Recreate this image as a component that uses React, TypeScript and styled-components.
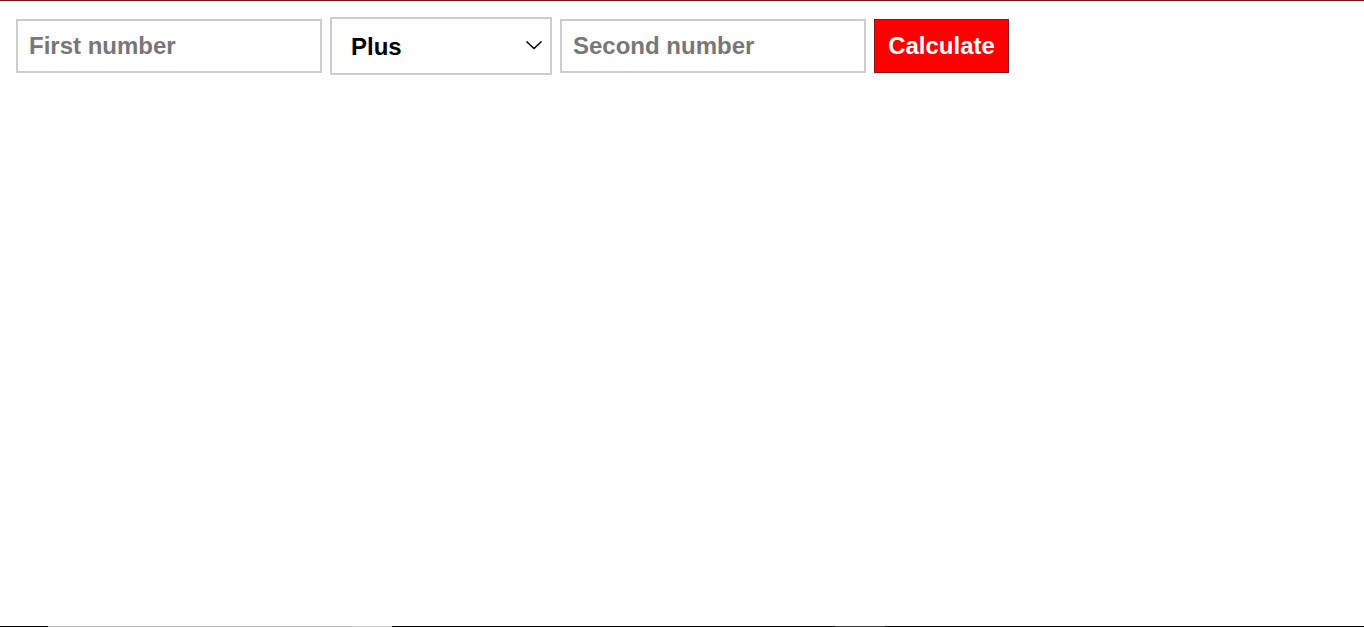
import React from "react";
import styled, { createGlobalStyle } from "styled-components";

const Global = createGlobalStyle`
  html, body { margin: 0; padding: 0; background: #fff; }
  body {
    border-top: 1px solid #7a1212;
    font-family: "Liberation Sans", Arial, sans-serif;
    min-height: 626px;
    box-sizing: border-box;
  }
`;

const Form = styled.form`
  display: flex;
  align-items: center;
  gap: 8px;
  padding: 16px;
`;

const NumberInput = styled.input`
  box-sizing: border-box;
  width: 306px;
  height: 54px;
  border: 2px solid #cccccc;
  padding: 0 11px;
  font-family: "Liberation Sans", Arial, sans-serif;
  font-weight: 700;
  font-size: 24px;
  color: #000;
  outline: none;
  &::placeholder { color: #777777; opacity: 1; }
`;

const SelectWrap = styled.div`
  position: relative;
  width: 222px;
  height: 58px;
`;

const Select = styled.select`
  box-sizing: border-box;
  width: 100%;
  height: 100%;
  appearance: none;
  border: 2px solid #cccccc;
  background: #fff;
  padding: 0 0 0 19px;
  font-family: "Liberation Sans", Arial, sans-serif;
  font-weight: 700;
  font-size: 24px;
  color: #000;
  outline: none;
`;

const Chevron = styled.svg`
  position: absolute;
  right: 9px;
  top: 22px;
  pointer-events: none;
`;

const Button = styled.button`
  box-sizing: border-box;
  width: 135px;
  height: 54px;
  background: #ff0000;
  border: 1px solid #8b1515;
  color: #fff;
  font-family: "Liberation Sans", Arial, sans-serif;
  font-weight: 700;
  font-size: 24px;
  padding: 0;
  cursor: pointer;
`;

const BottomEdge = styled.div`
  position: fixed;
  left: 0;
  right: 0;
  bottom: 0;
  height: 1px;
  background: linear-gradient(
    to right,
    #000 0px, #000 48px,
    #bbbbbb 48px, #bbbbbb 352px,
    #cccccc 352px, #cccccc 392px,
    #000 392px, #000 835px,
    #333333 835px, #333333 885px,
    #000 885px, #000 100%
  );
`;

export default function App() {
  return (
    <>
      <Global />
      <Form onSubmit={(e) => e.preventDefault()}>
        <NumberInput type="text" placeholder="First number" />
        <SelectWrap>
          <Select defaultValue="plus">
            <option value="plus">Plus</option>
            <option value="minus">Minus</option>
            <option value="times">Times</option>
            <option value="divide">Divide</option>
          </Select>
          <Chevron width="18" height="12" viewBox="0 0 18 12">
            <path d="M1.5 2.5 L9 9.5 L16.5 2.5" fill="none" stroke="#000" strokeWidth="1.6" />
          </Chevron>
        </SelectWrap>
        <NumberInput type="text" placeholder="Second number" />
        <Button type="submit">Calculate</Button>
      </Form>
      <BottomEdge />
    </>
  );
}
